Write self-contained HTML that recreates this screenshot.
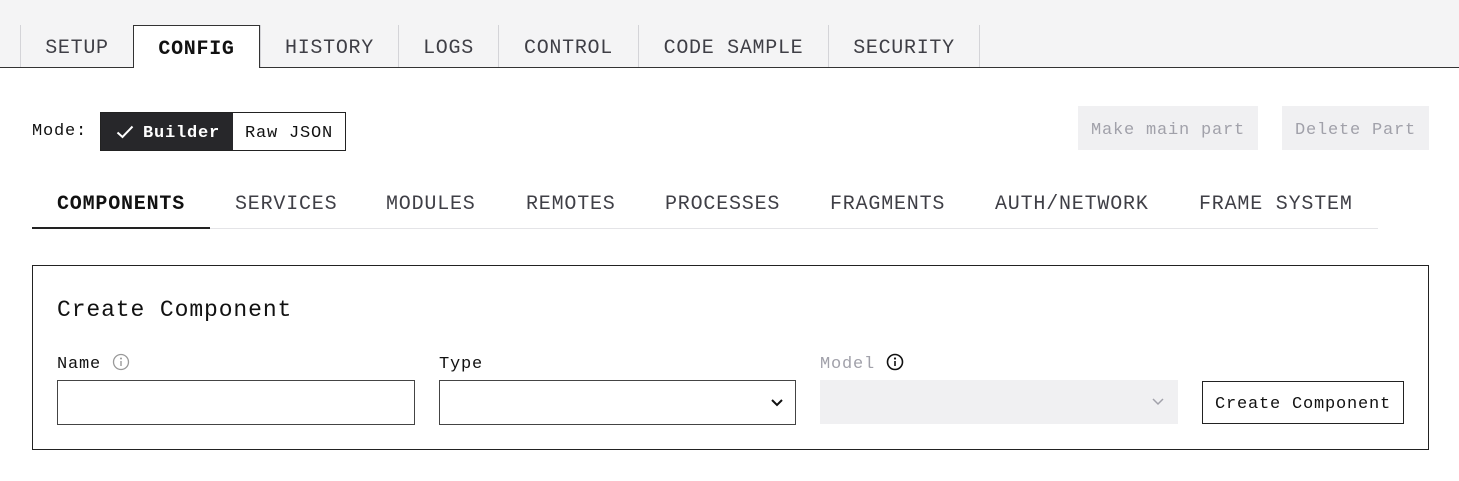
<!DOCTYPE html>
<html><head><style>
*{box-sizing:border-box;margin:0;padding:0}
body{width:1459px;height:481px;background:#fff;position:relative;font-family:"Liberation Mono",monospace;overflow:hidden;color:#111}
.a{position:absolute}
.topbar{left:0;top:0;width:1459px;height:68px;background:#f4f4f5;border-bottom:1px solid #333}
.tab{position:absolute;top:25px;height:42px;border-left:1px solid #d4d4d8;font-size:20px;letter-spacing:0.7px;color:#3f3f46;display:flex;align-items:center;justify-content:center;padding-top:4px}
.tab.act{background:#fff;border:1px solid #333;border-bottom:none;height:43px;color:#111;font-weight:bold}
.t17{font-size:17px;letter-spacing:0.8px}
.sub{position:absolute;top:193px;font-size:20px;letter-spacing:0.8px;color:#3f3f46}
.lbl{position:absolute;top:355px;font-size:17px;letter-spacing:0.8px}
.inp{position:absolute;top:380px;height:45px;border:1px solid #444;background:#fff}
.pd{padding-top:4px}
</style></head><body>
<div class="a topbar"></div>
<div class="tab" style="left:20px;width:113px">SETUP</div>
<div class="tab act" style="left:133px;width:127px">CONFIG</div>
<div class="tab" style="left:260px;width:138px">HISTORY</div>
<div class="tab" style="left:398px;width:100px">LOGS</div>
<div class="tab" style="left:498px;width:140px">CONTROL</div>
<div class="tab" style="left:638px;width:190px">CODE SAMPLE</div>
<div class="tab" style="left:828px;width:152px;border-right:1px solid #d4d4d8">SECURITY</div>

<div class="a t17" style="left:32px;top:122px">Mode:</div>
<div class="a" style="left:100px;top:112px;width:246px;height:39px;border:1px solid #222;display:flex">
 <div class="t17 pd" style="width:132px;background:#27272a;color:#fff;font-weight:bold;display:flex;align-items:center;padding-left:15px">
  <svg width="18" height="14" viewBox="0 0 18 14" style="margin-right:9px;margin-top:-3px"><path d="M1.5 7.5 L6.5 12 L16.5 1.5" stroke="#fff" stroke-width="2" fill="none"/></svg>Builder</div>
 <div class="t17 pd" style="flex:1;display:flex;align-items:center;justify-content:center">Raw JSON</div>
</div>
<div class="a t17 pd" style="left:1078px;top:106px;width:180px;height:44px;background:#f0f0f2;color:#a1a1aa;display:flex;align-items:center;justify-content:center">Make main part</div>
<div class="a t17 pd" style="left:1282px;top:106px;width:147px;height:44px;background:#f0f0f2;color:#a1a1aa;display:flex;align-items:center;justify-content:center">Delete Part</div>

<div class="sub" style="left:57px;color:#111;font-weight:bold">COMPONENTS</div>
<div class="sub" style="left:235px">SERVICES</div>
<div class="sub" style="left:386px">MODULES</div>
<div class="sub" style="left:526px">REMOTES</div>
<div class="sub" style="left:665px">PROCESSES</div>
<div class="sub" style="left:830px">FRAGMENTS</div>
<div class="sub" style="left:995px">AUTH/NETWORK</div>
<div class="sub" style="left:1199px">FRAME SYSTEM</div>
<div class="a" style="left:32px;top:228px;width:1346px;height:1px;background:#e4e4e7"></div>
<div class="a" style="left:32px;top:227px;width:178px;height:2px;background:#222"></div>

<div class="a" style="left:32px;top:265px;width:1397px;height:185px;border:1px solid #222"></div>
<div class="a" style="left:57px;top:297px;font-size:23px;letter-spacing:0.9px">Create Component</div>
<div class="lbl" style="left:57px">Name</div>
<svg class="a" style="left:112px;top:353px" width="18" height="18" viewBox="0 0 18 18"><circle cx="9" cy="9" r="7.5" stroke="#999" stroke-width="1.3" fill="none"/><circle cx="9" cy="5.5" r="1" fill="#999"/><path d="M9 8v5" stroke="#999" stroke-width="1.4"/></svg>
<div class="lbl" style="left:439px">Type</div>
<div class="lbl" style="left:820px;color:#a1a1aa">Model</div>
<svg class="a" style="left:886px;top:353px" width="18" height="18" viewBox="0 0 18 18"><circle cx="9" cy="9" r="7.5" stroke="#111" stroke-width="1.6" fill="none"/><circle cx="9" cy="5.5" r="1.1" fill="#111"/><path d="M9 8v5" stroke="#111" stroke-width="1.6"/></svg>
<div class="inp" style="left:57px;width:358px"></div>
<div class="inp" style="left:439px;width:357px"><svg class="a" style="left:330px;top:17px" width="14" height="10" viewBox="0 0 14 10"><path d="M2 2l5 5 5-5" stroke="#111" stroke-width="2" fill="none"/></svg></div>
<div class="inp" style="left:820px;width:358px;height:44px;border:none;background:#f0f0f2"><svg class="a" style="left:331px;top:17px" width="14" height="10" viewBox="0 0 14 10"><path d="M2 2l5 5 5-5" stroke="#a1a1aa" stroke-width="1.5" fill="none"/></svg></div>
<div class="a t17 pd" style="left:1202px;top:381px;width:202px;height:43px;border:1px solid #222;display:flex;align-items:center;justify-content:center">Create Component</div>
</body></html>
